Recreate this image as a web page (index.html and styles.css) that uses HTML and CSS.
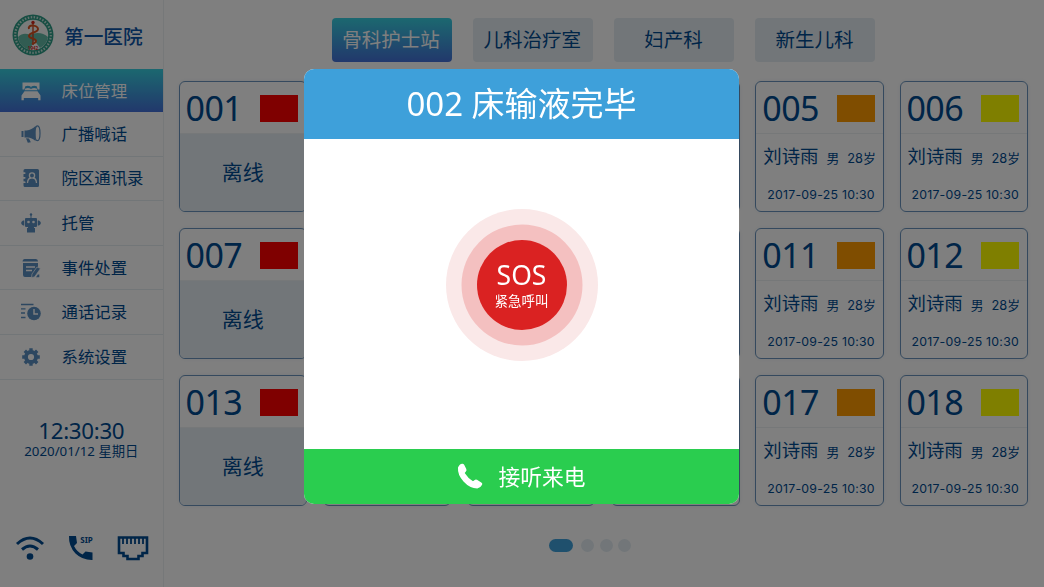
FILE: index.html
```
<!DOCTYPE html>
<html lang="zh-CN">
<head>
    <meta charset="UTF-8">
    <meta name="viewport" content="width=device-width, initial-scale=1.0">
    <title>第一医院</title>
    <link rel="stylesheet" href="styles.css">
</head>
<body>
    <div class="page">
        <aside class="sidebar">
            <div class="brand">
                <svg class="logo" viewBox="0 0 42 42">
                    <circle cx="21" cy="21" r="20.5" fill="#2f9c86"/>
                    <circle cx="21" cy="21" r="17.8" fill="none" stroke="#c4e2da" stroke-width="2.2" stroke-dasharray="1.5 1.5"/>
                    <circle cx="21" cy="21" r="15.2" fill="#f4f8f6"/>
                    <path d="M6 23c4-4 8-4 12-2 5-3 13-3 18 2a15.2 15.2 0 0 1-8 11l-6-8-4 10A15.2 15.2 0 0 1 6 23z" fill="#63b8a5"/>
                    <path d="M21 8v23" stroke="#c53a1c" stroke-width="1.3"/>
                    <circle cx="21" cy="8.500" r="1.700" fill="#d3281e"/>
                    <path d="M17 15c-2-5 9-4 9 0s-9 3-9 7c0 3 7 2 7 5 0 2-2 2-4 3" fill="none" stroke="#d8501e" stroke-width="2"/>
                    <text x="21" y="35.500" class="logo-year">1942</text>
                </svg>
                <span>第一医院</span>
            </div>
            <nav class="menu">
                <a class="menu-item active">
                    <svg viewBox="0 0 20 20"><path d="M1.500 1.500h17v7h-1.800l-1-3.200q-2.500-1.200-5 0L10 6.500l-.7-1.200q-2.500-1.200-5 0l-1 3.200H1.500zM4.300 7.500q2.700-1.200 5 0l.7.8.7-.8q2.300-1.200 5 0l.6 1.700H3.700zM3.500 10.200h13l3 4.300v4.700h-2.300v-2.200H2.800v2.200H.5v-4.700z"/></svg>
                    <span>床位管理</span>
                </a>
                <a class="menu-item">
                    <svg viewBox="0 0 20 20"><path d="M.5 7h2v6h-2zM3.500 6.500h2C9 6.300 12 4.500 14.500 2v15c-2.500-2.300-5-3.500-8-3.600h-3zM5 14.300l3 .2 1.800 3.800-3 .5z"/><ellipse cx="16.400" cy="9.300" rx="2.600" ry="7.400" class="line" stroke-width="1.200"/></svg>
                    <span>广播喊话</span>
                </a>
                <a class="menu-item">
                    <svg viewBox="0 0 20 20"><path d="M4 1h12.500q1.500 0 1.500 1.500v15q0 1.500-1.500 1.500H4q-1.500 0-1.500-1.500V15H4v-1.500H2.500v-3H4V9H2.500V6H4V4.500H2.500v-2Q2.500 1 4 1z"/><g fill="none" stroke="#fff" stroke-width="1.300"><circle cx="11" cy="7.500" r="2.600"/><path d="M6.500 15q.3-4.700 3.500-5M12 10q3.200.3 3.500 5M1.500 5.200h3M1.500 9.800h3M1.500 14.300h3"/></g></svg>
                    <span>院区通讯录</span>
                </a>
                <a class="menu-item">
                    <svg viewBox="0 0 20 20"><circle cx="10" cy="1.500" r="1.200"/><path d="M9.500 2h1v3h4.500q1 0 1 1v7q0 1-1 1h-2v1h1v4.500H6V15h1v-1H5q-1 0-1-1V6q0-1 1-1h4.500zM2 7.500h1.300v5H2L.3 11V9zM18 7.500h-1.300v5H18l1.700-1.500V9z"/><circle cx="7.500" cy="9" r="1.300" fill="#fff"/><circle cx="12.500" cy="9" r="1.300" fill="#fff"/></svg>
                    <span>托管</span>
                </a>
                <a class="menu-item">
                    <svg viewBox="0 0 20 20"><path d="M3.500 1h11.500q2 0 2 2.500h-15.500Q1.500 1 3.500 1zM2 5h15v7l-6.500 7H4q-2 0-2-2z"/><path d="M5 9h9M5 12.500h6" stroke="#fff" stroke-width="1.300"/><path d="M16 9l3.500 1.500-6 8.500-3 .5.5-3.500z" stroke="#fff" stroke-width=".7"/><path d="M15 19.200l1.800-2.600h1.500v2.600z"/></svg>
                    <span>事件处置</span>
                </a>
                <a class="menu-item">
                    <svg viewBox="0 0 20 20"><circle cx="13" cy="11.500" r="6.800"/><path d="M13 7v5h4" fill="none" stroke="#fff" stroke-width="1.400"/><path d="M0 2.500h12.500M0 6.800h4.500M0 11h4M0 15.500h4.500" class="line" stroke-width="1.300"/></svg>
                    <span>通话记录</span>
                </a>
                <a class="menu-item">
                    <svg viewBox="0 0 20 20"><circle cx="10" cy="10" r="5" class="line" stroke-width="3.800"/><path d="M10 1.200v3M10 15.800v3M1.200 10h3M15.800 10h3M3.800 3.800l2 2M14.200 14.200l2 2M3.800 16.200l2-2M14.200 5.800l2-2" class="line" stroke-width="3.400"/></svg>
                    <span>系统设置</span>
                </a>
            </nav>
            <div class="clock">
                <div class="time">12:30:30</div>
                <div class="date">2020/01/12 星期日</div>
            </div>
            <div class="status">
                <svg width="30" height="26" viewBox="0 0 30 26"><g fill="none" stroke="#004a90" stroke-width="3"><path d="M2 9q13-12 26 0M7 14.500q8-7 16 0"/></g><circle cx="15" cy="21.500" r="3.300" fill="#004a90"/></svg>
                <svg width="26" height="26" viewBox="0 0 26 26"><path d="M1 1h7l1 7-3 3q3 6 8.500 8.500l3-3 7 1V25q-10 .3-17-6.500Q.5 11 1 1z" fill="#004a90"/><text x="12.300" y="8" class="sip">SIP</text></svg>
                <svg width="32" height="26" viewBox="0 0 32 26"><path d="M2 2.500h28v15.500h-4.500v3h-4V24h-11v-3h-4v-3H2z" fill="none" stroke="#004a90" stroke-width="2.600"/><path d="M6 3v6M10 3v6M14 3v6M18 3v6M22 3v6M26 3v6" stroke="#004a90" stroke-width="1.800"/></svg>
            </div>
        </aside>

        <main class="content">
            <div class="tabs">
                <div class="tab active">骨科护士站</div>
                <div class="tab">儿科治疗室</div>
                <div class="tab">妇产科</div>
                <div class="tab">新生儿科</div>
            </div>
            <div class="beds">
                <div class="bed offline">
                    <div class="bed-head"><span>001</span><i class="level red"></i></div>
                    <div class="bed-body">离线</div>
                </div>
                <div class="bed"></div>
                <div class="bed"></div>
                <div class="bed"></div>
                <div class="bed">
                    <div class="bed-head"><span>005</span><i class="level orange"></i></div>
                    <div class="bed-body"><p class="patient"><b>刘诗雨</b><span>男</span><span>28岁</span></p><p class="since">2017-09-25 10:30</p></div>
                </div>
                <div class="bed">
                    <div class="bed-head"><span>006</span><i class="level yellow"></i></div>
                    <div class="bed-body"><p class="patient"><b>刘诗雨</b><span>男</span><span>28岁</span></p><p class="since">2017-09-25 10:30</p></div>
                </div>

                <div class="bed offline">
                    <div class="bed-head"><span>007</span><i class="level red"></i></div>
                    <div class="bed-body">离线</div>
                </div>
                <div class="bed"></div>
                <div class="bed"></div>
                <div class="bed"></div>
                <div class="bed">
                    <div class="bed-head"><span>011</span><i class="level orange"></i></div>
                    <div class="bed-body"><p class="patient"><b>刘诗雨</b><span>男</span><span>28岁</span></p><p class="since">2017-09-25 10:30</p></div>
                </div>
                <div class="bed">
                    <div class="bed-head"><span>012</span><i class="level yellow"></i></div>
                    <div class="bed-body"><p class="patient"><b>刘诗雨</b><span>男</span><span>28岁</span></p><p class="since">2017-09-25 10:30</p></div>
                </div>

                <div class="bed offline">
                    <div class="bed-head"><span>013</span><i class="level red"></i></div>
                    <div class="bed-body">离线</div>
                </div>
                <div class="bed"></div>
                <div class="bed"></div>
                <div class="bed"></div>
                <div class="bed">
                    <div class="bed-head"><span>017</span><i class="level orange"></i></div>
                    <div class="bed-body"><p class="patient"><b>刘诗雨</b><span>男</span><span>28岁</span></p><p class="since">2017-09-25 10:30</p></div>
                </div>
                <div class="bed">
                    <div class="bed-head"><span>018</span><i class="level yellow"></i></div>
                    <div class="bed-body"><p class="patient"><b>刘诗雨</b><span>男</span><span>28岁</span></p><p class="since">2017-09-25 10:30</p></div>
                </div>
            </div>
            <div class="pager"><i class="current"></i><i></i><i></i><i></i></div>
        </main>
    </div>

    <div class="overlay">
        <div class="modal">
            <div class="modal-head">002 床输液完毕</div>
            <div class="modal-body">
                <div class="sos">
                    <div class="sos-title">SOS</div>
                    <div class="sos-text">紧急呼叫</div>
                </div>
            </div>
            <div class="modal-foot">
                <svg width="26" height="26" viewBox="0 0 26 26"><path d="M1 4.500Q2.500 1 5.200.7 6.500.5 7.300 2l2 4q.6 1.500-.4 2.500L7.700 10q3.300 5.300 8.300 8.300l1.700-1.400q1-.8 2.300-.1l4.300 2.700q1.500 1 .8 2.300-1.600 3.300-4.800 3.700Q13 25.500 6.500 18.500.3 11.500 1 4.500z" fill="#fff"/></svg>
                <span>接听来电</span>
            </div>
        </div>
    </div>
</body>
</html>
```
FILE: styles.css
```
* { box-sizing: border-box; }
body { margin: 0; font-family: "Noto Sans", "Noto Sans CJK SC", sans-serif; color: #004a90; background: #fff; overflow: hidden; }
p { margin: 0; }
.page { display: flex; width: 1044px; height: 587px; }

/* sidebar */
.sidebar { width: 164px; border-right: 1px solid #edf0f2; display: flex; flex-direction: column; }
.brand { height: 69px; padding: 1px 0 0 12px; display: flex; align-items: center; gap: 10px; font-size: 19.700px; font-weight: 500; color: #0c55a8; }
.logo { width: 42px; height: 42px; }
.logo-year { font-size: 4.500px; font-weight: bold; fill: #d3281e; text-anchor: middle; }
.menu-item { display: flex; align-items: center; gap: 20.500px; height: 44.600px; padding-left: 21px; font-size: 16.400px; line-height: 24px; border-bottom: 1px solid #e4ecf1; }
.menu-item svg { width: 20px; height: 20px; fill: #5b8fc0; }
.menu-item .line { fill: none; stroke: #5b8fc0; }
.menu-item.active { height: 43px; color: #fff; border: 0; background: linear-gradient(#38d0e0, #4470d8); }
.menu-item.active svg { fill: #fff; }
.clock { margin-top: 35px; text-align: center; }
.time { font-size: 22.300px; line-height: 32px; letter-spacing: -0.3px; }
.date { font-size: 13.300px; line-height: 19px; margin-top: -5px; }
.status { margin-top: auto; padding: 0 14px 26px 15px; display: flex; justify-content: space-between; }
.sip { font-size: 8px; font-weight: bold; fill: #004a90; }

/* departments */
.content { flex: 1; padding: 18px 16px 0 15px; display: flex; flex-direction: column; }
.tabs { display: flex; gap: 21.200px; padding-left: 153px; }
.tab { width: 120px; height: 43.500px; border-radius: 4px; background: #e4edf3; font-size: 19.500px; line-height: 43.500px; text-align: center; text-indent: -1px; }
.tab.active { color: #fff; background: linear-gradient(#38d0e0, #4470d8); }

/* beds */
.beds { margin-top: 19.500px; display: grid; grid-template-columns: repeat(6, 128.500px); grid-auto-rows: 131px; gap: 16px 15.700px; }
.bed { border: 1px solid #6a93bc; border-radius: 6px; overflow: hidden; box-shadow: 0 0 4px rgba(0, 60, 120, 0.08); }
.bed-head { height: 52px; padding: 0 8px 0 6px; display: flex; align-items: center; justify-content: space-between; border-bottom: 1px solid #edf0f2; font-size: 34px; line-height: 52px; letter-spacing: -0.6px; }
.level { width: 38px; height: 27px; margin-top: 2px; }
.red { background: #f00; }
.orange { background: #ff9a00; }
.yellow { background: #ff0; }
.offline .bed-body { height: 78px; background: #e4edf3; font-size: 21px; line-height: 76px; text-align: center; }
.patient { display: flex; align-items: baseline; justify-content: space-between; padding: 8px 7px 0; font-size: 12.800px; line-height: 28px; font-family: Inter, "Noto Sans CJK SC", sans-serif; }
.patient b { font-size: 18.400px; font-weight: normal; }
.since { padding: 11.500px 8px 0 0; font-family: Inter, sans-serif; font-size: 12.300px; line-height: 20px; letter-spacing: 0.25px; text-align: right; }
.pager { display: flex; align-items: center; gap: 5.500px; margin: 32.500px 0 0 370px; }
.pager i { width: 13px; height: 13px; border-radius: 7px; background: #e4edf3; }
.pager .current { width: 24px; margin-right: 3px; background: #3ea0da; }

/* incoming call */
.overlay { position: fixed; inset: 0; padding: 69px 1px 0 0; display: flex; align-items: flex-start; justify-content: center; background: rgba(0, 0, 0, 0.5); }
.modal { width: 435px; height: 435px; border-radius: 10px; overflow: hidden; display: flex; flex-direction: column; background: #fff; color: #fff; }
.modal-head { height: 69.500px; background: #3ea0da; font-size: 33px; line-height: 70px; text-align: center; }
.modal-body { flex: 1; display: flex; align-items: center; justify-content: center; padding-bottom: 18px; }
.sos { width: 90px; height: 90px; border-radius: 50%; background: #da2222; box-shadow: 0 0 0 15.500px #f4c0c0, 0 0 0 31px #fae8e8; text-align: center; }
.sos-title { padding-top: 17px; font-size: 26.500px; line-height: 37px; }
.sos-text { font-size: 13.500px; line-height: 18px; margin-top: -2px; }
.modal-foot { height: 55px; padding-bottom: 2px; display: flex; align-items: center; justify-content: center; gap: 15px; background: #2acd4f; font-size: 21.800px; }
```
